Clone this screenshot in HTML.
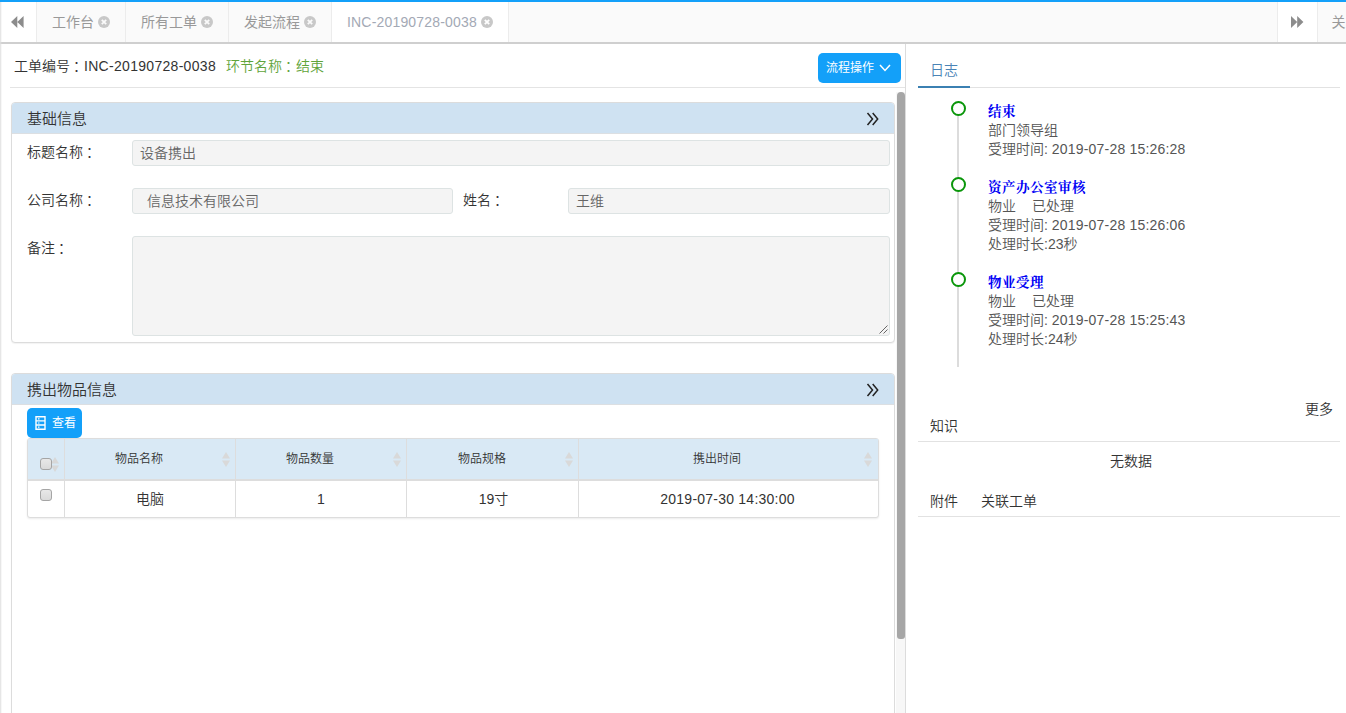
<!DOCTYPE html>
<html lang="zh-CN">
<head>
<meta charset="utf-8">
<title>INC-20190728-0038</title>
<style>
*{box-sizing:border-box;margin:0;padding:0}
html,body{width:1346px;height:713px;overflow:hidden;background:#fff}
body{position:relative;font-family:"Liberation Sans","Noto Sans CJK SC",sans-serif;font-size:14px;color:#333;font-weight:350}
.abs{position:absolute}
.t{position:absolute;white-space:nowrap;line-height:20px}
/* top bar */
#topline{left:0;top:0;width:1346px;height:2px;background:#13a0f9}
#tabbar{left:0;top:2px;width:1346px;height:42px;background:#fafafa;border-bottom:2px solid #cfcfcf}
.tab{font-weight:400;position:absolute;top:0;height:40px;border-right:1px solid #ececec;color:#999;font-size:14px;line-height:40px;white-space:nowrap}
.tab .x{position:absolute;top:14px;width:12px;height:12px;border-radius:50%;background:#c8c8c8}
.tab .x svg{position:absolute;left:0;top:0}
/* panels */
.panel{position:absolute;left:11px;width:884px;border:1px solid #dcdcdc;border-radius:4px;background:#fff;box-shadow:0 1px 1px rgba(0,0,0,.05)}
.phead{position:absolute;left:0;top:0;width:882px;height:31px;background:#cfe2f2;border-radius:3px 3px 0 0;border-bottom:1px solid #dcdfe2}
.inp{position:absolute;background:#f4f4f4;border:1px solid #dde3e3;border-radius:3px;color:#666;font-size:14px;line-height:24px;white-space:nowrap}
.lbl{position:absolute;white-space:nowrap;font-size:14px;color:#333;line-height:20px}
.btn{font-weight:400;position:absolute;background:#13a0f9;color:#fff;border-radius:5px;font-size:13px;white-space:nowrap}
/* table */
#tbl{left:27px;top:438px;width:852px;height:80px;border:1px solid #ddd;border-radius:3px;background:#fff;box-shadow:0 1px 2px rgba(0,0,0,.08)}
#thead{left:0;top:0;width:850px;height:42px;background:#d9e9f5;border-bottom:2px solid #ddd}
.vl{position:absolute;top:0;width:1px;height:78px;background:#ddd}
.th{position:absolute;top:0;height:40px;line-height:41px;text-align:center;font-size:12px;color:#333}
.td{position:absolute;top:42px;height:37px;line-height:37px;text-align:center;font-size:14px;color:#333;font-weight:350}
.sort{position:absolute;top:13px;width:8px;height:15px}
.cb{position:absolute;width:12px;height:12px;border:1px solid #a5a5a5;border-radius:3px;background:linear-gradient(#e8e8e8,#dadada)}
/* right */
.lt{position:absolute;left:988px;white-space:nowrap;font-size:14px;line-height:19px;color:#555}
.lt.b{font-family:"Liberation Serif","Noto Serif CJK SC",serif;font-weight:bold;color:#0000f5;font-size:13.5px;letter-spacing:.5px}
.dot{position:absolute;left:951px;width:15px;height:15px;border:2px solid #0a960a;border-radius:50%;background:#fff}
.c{position:relative;left:3px}
.hl{position:absolute;height:1px;background:#e2e2e2}
</style>
</head>
<body>
<div class="abs" id="topline"></div>
<div class="abs" id="tabbar">
  <div class="tab" style="left:0;width:37px;background:#fff">
    <svg class="abs" style="left:11px;top:14px" width="13" height="12" viewBox="0 0 13 12"><path d="M6.3 0v12L0 6zM12.6 0v12L6.3 6z" fill="#8c8c8c"/></svg>
  </div>
  <div class="tab" style="left:37px;width:89px;padding-left:15px">工作台<span class="x" style="left:61px"><svg width="12" height="12" viewBox="0 0 12 12"><path d="M3.8 3.8l4.4 4.4M8.2 3.8l-4.4 4.4" stroke="#fafafa" stroke-width="1.8"/></svg></span></div>
  <div class="tab" style="left:126px;width:103px;padding-left:15px">所有工单<span class="x" style="left:75px"><svg width="12" height="12" viewBox="0 0 12 12"><path d="M3.8 3.8l4.4 4.4M8.2 3.8l-4.4 4.4" stroke="#fafafa" stroke-width="1.8"/></svg></span></div>
  <div class="tab" style="left:229px;width:103px;padding-left:15px">发起流程<span class="x" style="left:75px"><svg width="12" height="12" viewBox="0 0 12 12"><path d="M3.8 3.8l4.4 4.4M8.2 3.8l-4.4 4.4" stroke="#fafafa" stroke-width="1.8"/></svg></span></div>
  <div class="tab" style="left:332px;width:177px;padding-left:15px;background:#fff;color:#a3a9b5;letter-spacing:.18px">INC-20190728-0038<span class="x" style="left:149px"><svg width="12" height="12" viewBox="0 0 12 12"><path d="M3.8 3.8l4.4 4.4M8.2 3.8l-4.4 4.4" stroke="#fff" stroke-width="1.8"/></svg></span></div>
  <div class="tab" style="left:1277px;width:41px;background:#fff;border-left:1px solid #ececec">
    <svg class="abs" style="left:13px;top:14px" width="13" height="12" viewBox="0 0 13 12"><path d="M0 0v12l6.2-6zM6.2 0v12l6.2-6z" fill="#8c8c8c"/></svg>
  </div>
  <div class="tab" style="left:1318px;width:40px;padding-left:13.5px;border-right:0;background:#fafafa">关闭</div>
</div>

<!-- left strip shadow -->
<div class="abs" style="left:0;top:2px;width:2px;height:711px;background:linear-gradient(90deg,#dedede,rgba(255,255,255,0))"></div>

<!-- header row -->
<div class="t" style="left:14px;top:56px;font-size:14px;color:#333">工单编号<span class="c">：</span><span style="letter-spacing:.3px">INC-20190728-0038</span></div>
<div class="t" style="left:226px;top:56px;font-size:14px;color:#5fa43a">环节名称<span class="c">：</span>结束</div>
<div class="btn" style="left:818px;top:53px;width:83px;height:30px;line-height:30px;padding-left:8px;font-size:12px">流程操作
  <svg class="abs" style="left:61px;top:11px" width="12" height="8" viewBox="0 0 12 8"><path d="M1 1l5 5.5L11 1" stroke="#fff" stroke-width="1.5" fill="none"/></svg>
</div>
<div class="hl" style="left:10px;top:87px;width:895px;background:#e4e4e4"></div>

<!-- panel 1 -->
<div class="panel" style="top:102px;height:241px">
  <div class="phead"></div>
  <div class="lbl" style="left:15px;top:6px;font-size:15px">基础信息</div>
  <svg class="abs" style="left:854px;top:9px" width="14" height="14" viewBox="0 0 14 14"><path d="M1.5 1l5 6-5 6M6.7 1l5 6-5 6" stroke="#222" stroke-width="1.5" fill="none"/></svg>
  <div class="lbl" style="left:15px;top:39px">标题名称<span class="c">：</span></div>
  <div class="inp" style="left:120px;top:37px;width:758px;height:26px;padding-left:7px">设备携出</div>
  <div class="lbl" style="left:15px;top:87px">公司名称<span class="c">：</span></div>
  <div class="inp" style="left:120px;top:85px;width:321px;height:26px;padding-left:14px">信息技术有限公司</div>
  <div class="lbl" style="left:451px;top:87px">姓名<span class="c">：</span></div>
  <div class="inp" style="left:556px;top:85px;width:322px;height:26px;padding-left:7px">王维</div>
  <div class="lbl" style="left:15px;top:135px">备注<span class="c">：</span></div>
  <div class="inp" style="left:120px;top:133px;width:758px;height:100px">
    <svg class="abs" style="right:1px;bottom:1px" width="9" height="9" viewBox="0 0 9 9"><path d="M0.5 8.5l8-8M4.5 8.5l4-4" stroke="#666" stroke-width="1"/></svg>
  </div>
</div>

<!-- panel 2 -->
<div class="panel" style="top:373px;height:360px">
  <div class="phead"></div>
  <div class="lbl" style="left:15px;top:6px;font-size:15px">携出物品信息</div>
  <svg class="abs" style="left:854px;top:9px" width="14" height="14" viewBox="0 0 14 14"><path d="M1.5 1l5 6-5 6M6.7 1l5 6-5 6" stroke="#222" stroke-width="1.5" fill="none"/></svg>
</div>
<div class="btn" style="left:27px;top:408px;width:55px;height:30px;line-height:30px;padding-left:25px;font-size:12px">查看
  <svg class="abs" style="left:8px;top:8px" width="11" height="14" viewBox="0 0 11 14"><path d="M1 .8h9v12.4H1zM1 4.9h9M1 9h9" stroke="#fff" stroke-width="1.4" fill="none"/><path d="M3 2.9h1.5M3 7h1.5M3 11.1h1.5" stroke="#fff" stroke-width="1.1" fill="none"/></svg>
</div>

<div class="abs" id="tbl">
  <div class="abs" id="thead"></div>
  <div class="vl" style="left:36px"></div>
  <div class="vl" style="left:207px"></div>
  <div class="vl" style="left:378px"></div>
  <div class="vl" style="left:550px"></div>
  <svg class="sort" style="left:23px;top:18px;width:8px;height:15px" viewBox="0 0 8 15"><path d="M4 0l4 6.5H0zM4 15L0 8.5h8z" fill="#d8d8d8"/></svg>
  <div class="cb" style="left:12px;top:19px"></div>
  <div class="cb" style="left:12px;top:50px"></div>
  <div class="th" style="left:36px;width:150px">物品名称</div>
  <div class="th" style="left:207px;width:150px">物品数量</div>
  <div class="th" style="left:379px;width:150px">物品规格</div>
  <div class="th" style="left:550px;width:278px">携出时间</div>
    <svg class="sort" style="left:194px" viewBox="0 0 8 15"><path d="M4 0l4 6.5H0zM4 15L0 8.5h8z" fill="#d9d9d9"/></svg>
  <svg class="sort" style="left:365px" viewBox="0 0 8 15"><path d="M4 0l4 6.5H0zM4 15L0 8.5h8z" fill="#d9d9d9"/></svg>
  <svg class="sort" style="left:537px" viewBox="0 0 8 15"><path d="M4 0l4 6.5H0zM4 15L0 8.5h8z" fill="#d9d9d9"/></svg>
  <svg class="sort" style="left:836px" viewBox="0 0 8 15"><path d="M4 0l4 6.5H0zM4 15L0 8.5h8z" fill="#d9d9d9"/></svg>
  <div class="td" style="left:37px;width:170px">电脑</div>
  <div class="td" style="left:208px;width:170px">1</div>
  <div class="td" style="left:380px;width:171px">19寸</div>
  <div class="td" style="left:550px;width:299px;letter-spacing:.23px">2019-07-30 14:30:00</div>
</div>

<!-- scrollbar -->
<div class="abs" style="left:896px;top:92px;width:9px;height:621px;background:#f7f7f7"></div>
<div class="abs" style="left:897px;top:92px;width:8px;height:547px;background:#a6a6a6;border-radius:4px 4px 3px 3px"></div>
<div class="abs" style="left:905px;top:44px;width:1px;height:669px;background:#dcdcdc"></div>

<!-- right pane -->
<div class="t" style="left:930px;top:60px;font-size:14px;color:#4a84b6">日志</div>
<div class="hl" style="left:918px;top:87px;width:422px"></div>
<div class="abs" style="left:918px;top:86px;width:52px;height:2px;background:#3b80b2"></div>

<div class="abs" style="left:957px;top:108px;width:2px;height:259px;background:#dcdcdc"></div>
<div class="dot" style="top:101px"></div>
<div class="dot" style="top:177px"></div>
<div class="dot" style="top:272px"></div>

<div class="lt b" style="top:102px">结束</div>
<div class="lt" style="top:121px">部门领导组</div>
<div class="lt" style="top:140px">受理时间: <span style="letter-spacing:.2px">2019-07-28 15:26:28</span></div>

<div class="lt b" style="top:178px">资产办公室审核</div>
<div class="lt" style="top:197px">物业<span style="margin-left:16px">已处理</span></div>
<div class="lt" style="top:216px">受理时间: <span style="letter-spacing:.2px">2019-07-28 15:26:06</span></div>
<div class="lt" style="top:235px">处理时长:23秒</div>

<div class="lt b" style="top:273px">物业受理</div>
<div class="lt" style="top:292px">物业<span style="margin-left:16px">已处理</span></div>
<div class="lt" style="top:311px">受理时间: <span style="letter-spacing:.2px">2019-07-28 15:25:43</span></div>
<div class="lt" style="top:330px">处理时长:24秒</div>

<div class="t" style="left:1305px;top:399px;font-size:14px;color:#333">更多</div>
<div class="t" style="left:930px;top:416px;font-size:14px;color:#333">知识</div>
<div class="hl" style="left:918px;top:441px;width:422px"></div>
<div class="t" style="left:1110px;top:451px;font-size:14px;color:#333">无数据</div>
<div class="t" style="left:930px;top:491px;font-size:14px;color:#333">附件</div>
<div class="t" style="left:981px;top:491px;font-size:14px;color:#333">关联工单</div>
<div class="hl" style="left:918px;top:516px;width:422px"></div>
</body>
</html>
